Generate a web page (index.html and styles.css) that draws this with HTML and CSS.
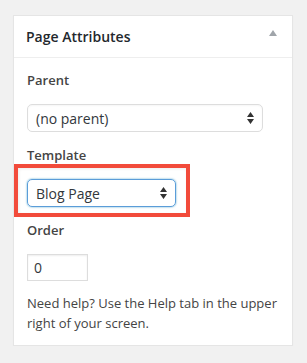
FILE: index.html
```html
<!DOCTYPE html>
<html lang="en">
<head>
  <meta charset="UTF-8" />
  <meta name="viewport" content="width=device-width, initial-scale=1.0"/>
  <title>Page Attributes</title>
  <link rel="stylesheet" href="styles.css">
</head>
<body>

  <div class="postbox">
    <div class="hndle">
      <h2>Page Attributes</h2>
      <svg class="toggle" width="8" height="6" viewBox="0 0 8 6"><path d="M4 0L8 6H0Z" fill="#a0a5aa"/></svg>
    </div>

    <div class="inside">
      <p class="label">Parent</p>
      <div class="select wide">
        <span>(no parent)</span>
        <svg width="7" height="12" viewBox="0 0 7 12"><path d="M3.5 0L7 5H0ZM3.5 12L0 7H7Z" fill="#333"/></svg>
      </div>

      <p class="label tight">Template</p>
      <!-- highlight around the template picker -->
      <div class="highlight">
        <div class="select focused">
          <span>Blog Page</span>
          <svg width="7" height="12" viewBox="0 0 7 12"><path d="M3.5 0L7 5H0ZM3.5 12L0 7H7Z" fill="#333"/></svg>
        </div>
      </div>

      <p class="label">Order</p>
      <input class="order" type="text" value="0">

      <p class="help">Need help? Use the Help tab in the upper right of your screen.</p>
    </div>
  </div>

</body>
</html>
```

FILE: styles.css
```css
* {
  box-sizing: border-box;
}

html, body {
  margin: 0;
  padding: 0;
  background: #f1f1f1;
  font-family: 'Open Sans', sans-serif;
  color: #444;
}

body {
  padding: 15px 0 0 13px;
}

.postbox {
  width: 280px;
  background: #fff;
  border: 1px solid #e5e5e5;
  box-shadow: 0 1px 1px rgba(0, 0, 0, 0.04);
}

.hndle {
  display: flex;
  justify-content: space-between;
  align-items: center;
  height: 42px;
  padding: 0 15px 0 12px;
  border-bottom: 1px solid #eee;
}

.hndle h2 {
  margin: 0;
  font-size: 14px;
  font-weight: 600;
  line-height: 41px;
  color: #23282d;
}

.toggle {
  margin-top: -8px;
}

.inside {
  padding: 13px 13px 12px 13px;
}

.label {
  margin: 0 0 15px;
  font-size: 13px;
  font-weight: 600;
  line-height: 18px;
  color: #444;
}

.label.tight {
  margin-bottom: 0;
}

.select {
  display: flex;
  justify-content: space-between;
  align-items: center;
  height: 28px;
  padding: 0 8px 0 8px;
  border: 1px solid #ddd;
  border-radius: 5px;
  font-size: 14px;
  color: #32373c;
  box-shadow: inset 0 1px 2px rgba(0, 0, 0, 0.04);
  margin-bottom: 14px;
}

.select.wide {
  width: 236px;
}

.select.focused {
  width: 149px;
  margin: 0;
  border-color: #5b9dd9;
  box-shadow: 0 0 2px rgba(30, 140, 190, 0.8);
}

.highlight {
  width: 176px;
  margin: 0 0 4px -13px;
  padding: 11px 0 6px 9px;
  border: 4px solid #f24b3b;
  box-shadow: inset 1px 1px 3px rgba(0, 0, 0, 0.08);
}

.order {
  display: block;
  width: 61px;
  height: 27px;
  padding: 0 6px;
  border: 1px solid #ddd;
  border-radius: 0;
  box-shadow: inset 0 1px 2px rgba(0, 0, 0, 0.07);
  font-family: 'Open Sans', sans-serif;
  font-size: 14px;
  color: #32373c;
  margin: 0 0 13px;
}

.help {
  margin: 0;
  font-size: 13px;
  line-height: 19.5px;
  color: #444;
}
```
